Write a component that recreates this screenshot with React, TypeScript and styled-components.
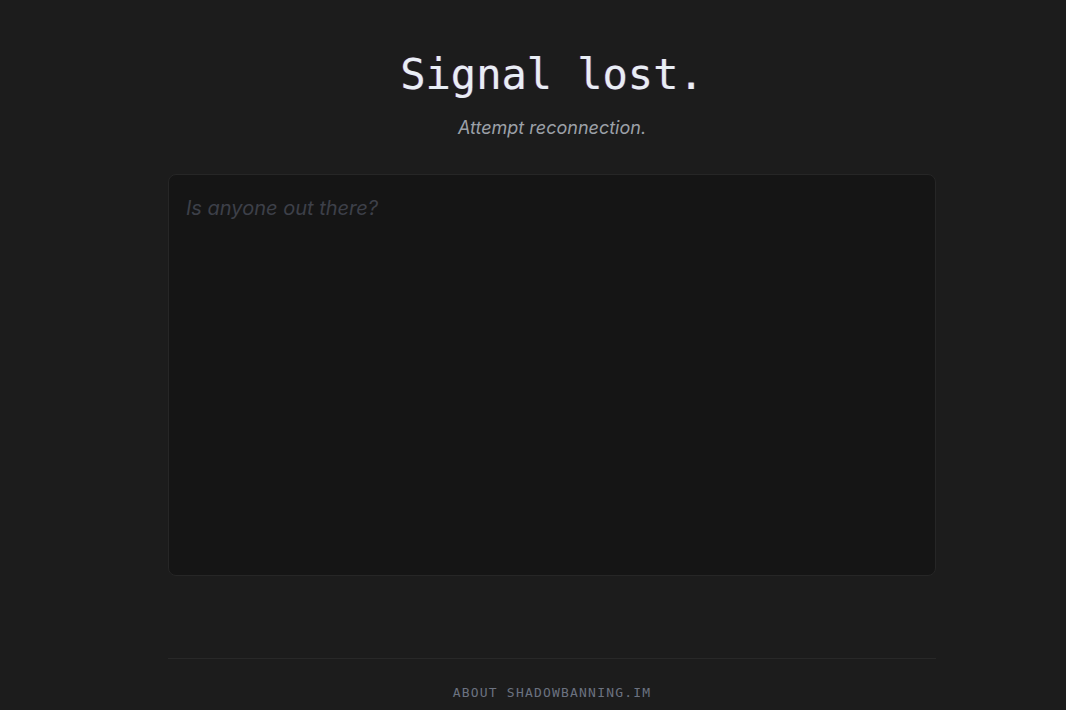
import React, { useState } from 'react';
import styled, { createGlobalStyle } from 'styled-components';

const GlobalStyle = createGlobalStyle`
  html, body {
    margin: 0;
    padding: 0;
    background: #1c1c1c;
  }
  body {
    font-family: Inter, "Noto Sans", sans-serif;
  }
`;

const Page = styled.div`
  min-height: 100vh;
  display: flex;
  flex-direction: column;
  align-items: center;
  box-sizing: border-box;
  padding: 48px 0 0 38px;
`;

const Column = styled.main`
  width: 768px;
  display: flex;
  flex-direction: column;
  align-items: center;
`;

const Title = styled.h1`
  margin: 0;
  font-family: "DejaVu Sans Mono", monospace;
  font-weight: 400;
  font-size: 42px;
  line-height: 54px;
  color: #e8eef5;
  text-shadow: -1px 0 rgba(255, 40, 60, 0.35), 1px 0 rgba(40, 120, 255, 0.35);
`;

const Subtitle = styled.p`
  margin: 14px 0 0;
  font-style: italic;
  font-size: 18px;
  line-height: 24px;
  color: #9ca1a8;
`;

const MessageBox = styled.textarea`
  margin-top: 34px;
  width: 100%;
  height: 402px;
  box-sizing: border-box;
  padding: 20px 17px;
  resize: none;
  background: #151515;
  border: 1px solid #262626;
  border-radius: 8px;
  color: #d8dde3;
  font-family: Inter, "Noto Sans", sans-serif;
  font-style: italic;
  font-size: 20px;
  line-height: 26px;
  outline: none;

  &::placeholder {
    color: #3d4049;
  }
`;

const Footer = styled.footer`
  margin-top: 82px;
  width: 100%;
  border-top: 1px solid #282828;
  padding-top: 26px;
  display: flex;
  justify-content: center;
`;

const FooterLink = styled.a`
  font-family: "DejaVu Sans Mono", monospace;
  font-size: 13px;
  letter-spacing: 1.2px;
  color: #6b7280;
  text-decoration: none;
`;

const App: React.FC = () => {
  const [message, setMessage] = useState('');

  return (
    <>
      <GlobalStyle />
      <Page>
        <Column>
          <Title>Signal lost.</Title>
          <Subtitle>Attempt reconnection.</Subtitle>
          <MessageBox
            value={message}
            onChange={(e) => setMessage(e.target.value)}
            placeholder="Is anyone out there?"
          />
          <Footer>
            <FooterLink href="#">ABOUT SHADOWBANNING.IM</FooterLink>
          </Footer>
        </Column>
      </Page>
    </>
  );
};

export default App;
